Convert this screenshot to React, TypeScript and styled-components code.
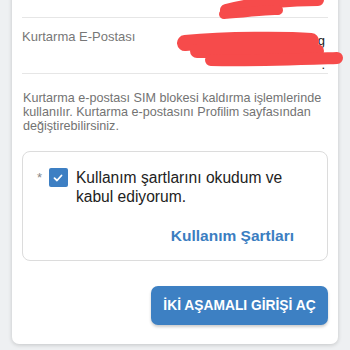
import React from 'react';
import styled, { createGlobalStyle } from 'styled-components';

const GlobalStyle = createGlobalStyle`
  html, body {
    margin: 0;
    padding: 0;
    background: #eef0f2;
    font-family: "Liberation Sans", Arial, sans-serif;
    overflow: hidden;
  }
`;

const Page = styled.div`
  width: 350px;
  height: 350px;
  overflow: hidden;
`;

const Card = styled.div`
  margin: -40px 12px 0 12px;
  background: #fff;
  border-radius: 0 0 7px 7px;
  box-shadow: 0 1px 4px rgba(0, 0, 0, 0.18);
  padding: 0 10px 19px 10px;
`;

const InfoRow = styled.div<{ $h: number }>`
  position: relative;
  height: ${(p) => p.$h}px;
  border-bottom: 1px solid #e6e6e6;
  display: flex;
  justify-content: space-between;
  padding-top: 11px;
  box-sizing: border-box;
`;

const Label = styled.div`
  font-size: 13px;
  line-height: 15px;
  color: #777;
`;

const Value = styled.div`
  font-size: 13px;
  color: #222;
  text-align: right;
  line-height: 24px;
  width: 130px;
  padding-right: 3px;
`;

const Scribble = styled.svg`
  position: absolute;
  pointer-events: none;
`;

const Note = styled.p`
  margin: 17px 0 0 1px;
  font-size: 12.6px;
  line-height: 14px;
  color: #737373;
`;

const TermsBox = styled.div`
  margin-top: 18px;
  border: 1px solid #dcdcdc;
  border-radius: 8px;
  height: 110px;
  box-sizing: border-box;
  padding: 16px 12px 0 10px;
`;

const CheckLine = styled.div`
  display: flex;
  align-items: flex-start;
`;

const Star = styled.span`
  font-size: 13px;
  color: #888;
  width: 16px;
  padding-left: 4px;
  margin-top: 2px;
`;

const Box = styled.span`
  flex: none;
  width: 19px;
  height: 19px;
  border-radius: 2px;
  background: #3d7fc3;
  display: flex;
  align-items: center;
  justify-content: center;
  margin-right: 8px;
`;

const CheckText = styled.span`
  font-size: 15.6px;
  line-height: 19px;
  color: #222;
`;

const TermsLink = styled.div`
  margin-top: 21px;
  text-align: right;
  padding-right: 21px;
  font-size: 15.5px;
  line-height: 18px;
  font-weight: 700;
  color: #3b7ec1;
`;

const Actions = styled.div`
  display: flex;
  justify-content: flex-end;
  margin-top: 25px;
`;

const Primary = styled.button`
  height: 39px;
  width: 177px;
  border: none;
  border-radius: 7px;
  background: #3d80c3;
  color: #fff;
  font-family: "Liberation Sans", Arial, sans-serif;
  font-size: 13.8px;
  font-weight: 700;
  box-shadow: 0 2px 3px rgba(0, 0, 0, 0.2);
`;

const RED = '#f64b4b';

export default function App() {
  return (
    <Page>
      <GlobalStyle />
      <Card>
        <InfoRow $h={58}>
          <Label>Telefon No</Label>
          <Value>+90 5xx xxx xx xx</Value>
          <Scribble width="120" height="30" style={{ left: 194, top: 32 }} viewBox="0 0 120 30">
            <path d="M10 18 C40 10, 80 8, 102 8" stroke={RED} strokeWidth="12" fill="none" strokeLinecap="round" />
            <path d="M8 22 C30 21, 50 17, 62 18" stroke={RED} strokeWidth="10" fill="none" strokeLinecap="round" />
          </Scribble>
        </InfoRow>
        <InfoRow $h={56}>
          <Label>Kurtarma E-Postası</Label>
          <Value>xxxxxxxxxg<br />.</Value>
          <Scribble width="190" height="44" style={{ left: 155, top: 12 }} viewBox="0 0 190 44">
            <path d="M8 13 C50 9, 110 9, 134 11" stroke={RED} strokeWidth="16" fill="none" strokeLinecap="round" />
            <path d="M20 21 L140 21" stroke={RED} strokeWidth="14" fill="none" strokeLinecap="round" />
            <path d="M34 30 C80 31, 130 29, 160 28" stroke={RED} strokeWidth="12" fill="none" strokeLinecap="round" />
          </Scribble>
        </InfoRow>
        <Note>
          Kurtarma e-postası SIM blokesi kaldırma işlemlerinde kullanılır. Kurtarma e-postasını Profilim sayfasından değiştirebilirsiniz.
        </Note>
        <TermsBox>
          <CheckLine>
            <Star>*</Star>
            <Box>
              <svg width="12" height="12" viewBox="0 0 12 12">
                <path d="M2.5 6.2 L5 8.5 L9.5 3.5" stroke="#fff" strokeWidth="1.8" fill="none" strokeLinecap="round" strokeLinejoin="round" />
              </svg>
            </Box>
            <CheckText>Kullanım şartlarını okudum ve kabul ediyorum.</CheckText>
          </CheckLine>
          <TermsLink>Kullanım Şartları</TermsLink>
        </TermsBox>
        <Actions>
          <Primary>İKİ AŞAMALI GİRİŞİ AÇ</Primary>
        </Actions>
      </Card>
    </Page>
  );
}
